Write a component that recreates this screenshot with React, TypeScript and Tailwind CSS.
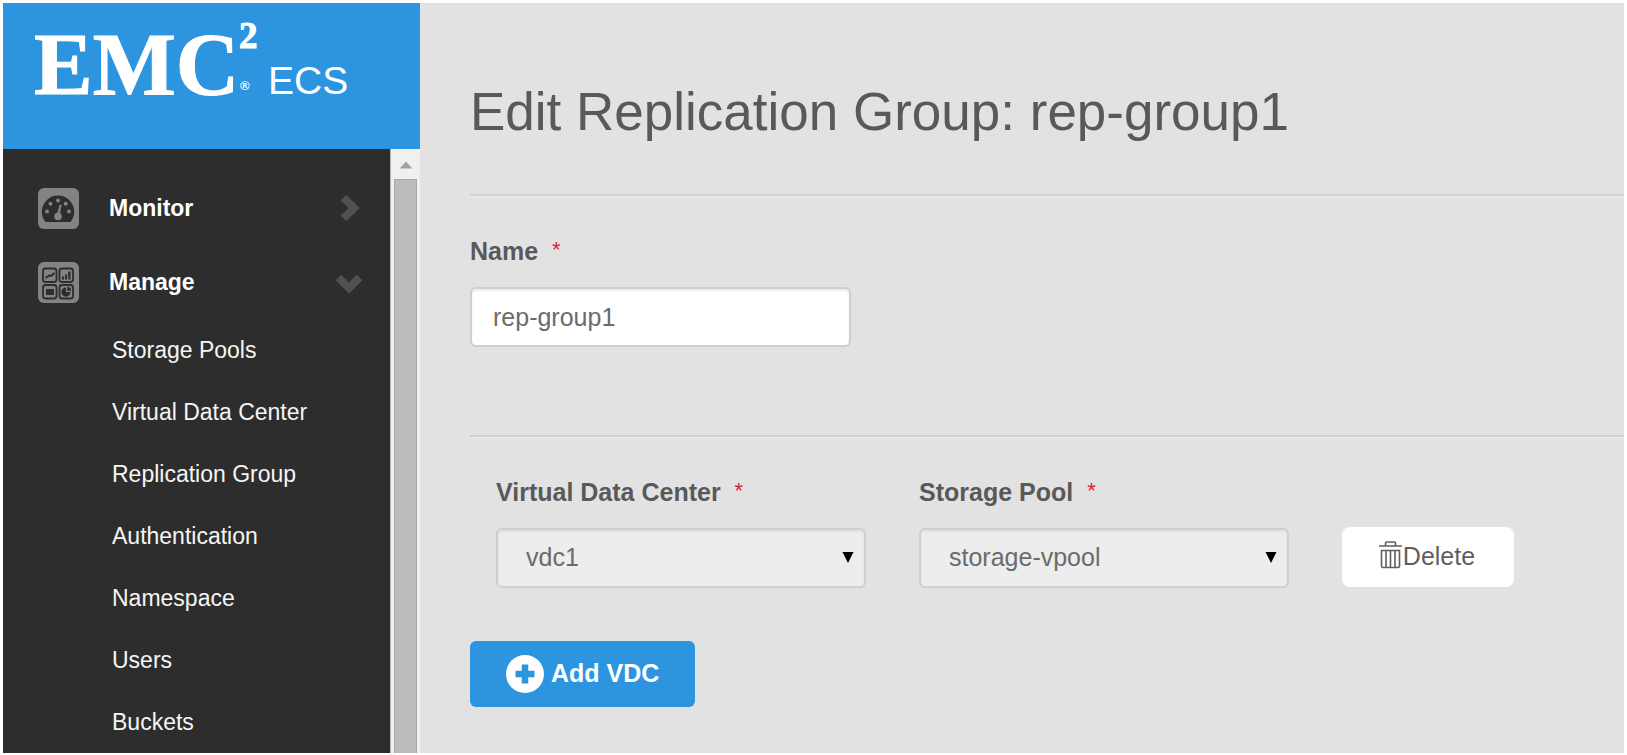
import { useId, useState } from "react";
import type { ReactNode } from "react";

const manageLinks = [
  "Storage Pools",
  "Virtual Data Center",
  "Replication Group",
  "Authentication",
  "Namespace",
  "Users",
  "Buckets",
];

function EmcLogo() {
  return (
    <svg width="234" height="108" viewBox="0 0 234 108" fill="#fff" role="img" aria-label="EMC²" className="font-['Liberation_Serif',serif] font-bold">
      <text x="0" y="87" fontSize="88" stroke="#fff" strokeWidth="1">EMC</text>
      <text x="205" y="41" fontSize="37" stroke="#fff" strokeWidth="1">2</text>
      <text x="206" y="83" fontSize="13" fontFamily="Liberation Sans, sans-serif">®</text>
    </svg>
  );
}

function GaugeIcon() {
  return (
    <svg width="41" height="41" viewBox="0 0 41 41" aria-hidden="true">
      <rect width="41" height="41" rx="6" fill="#838383" />
      <path d="M7.5 34A16.2 16.2 0 1 1 32.500 34Z" fill="#2d2d2d" />
      <g fill="#838383">
        <circle cx="9" cy="23.500" r="2" />
        <circle cx="12.500" cy="15.800" r="2" />
        <circle cx="20" cy="12.500" r="2" />
        <circle cx="27.700" cy="15.800" r="2" />
        <circle cx="31" cy="23.500" r="2" />
        <circle cx="20" cy="28.500" r="3.800" />
        <path d="M21.800 16.500L23.600 17L21.800 27L18.800 26Z" />
      </g>
    </svg>
  );
}

function DashboardIcon() {
  return (
    <svg width="41" height="41" viewBox="0 0 41 41" aria-hidden="true">
      <rect width="41" height="41" rx="6" fill="#838383" />
      <g fill="none" stroke="#2d2d2d" strokeWidth="1.800">
        <rect x="5" y="6.500" width="13.500" height="13.500" rx="2.500" />
        <rect x="21.500" y="6.500" width="13.500" height="13.500" rx="2.500" />
        <rect x="5" y="23" width="13.500" height="13.500" rx="2.500" />
        <rect x="21.500" y="23" width="13.500" height="13.500" rx="2.500" />
        <path d="M7.500 16L11 13.500L13 14L16.500 11" strokeWidth="2" />
      </g>
      <g fill="#2d2d2d">
        <path d="M24 14.500h2V17.500h-2zM27 12.500h2V17.500h-2zM30.200 9.500h2.300V17.500h-2.300z" />
        <rect x="8" y="27" width="8" height="6" />
        <path d="M28 25.500V30H32.500A4.600 4.600 0 1 1 28 25.500Z" />
        <path d="M29.300 24.800A4 4 0 0 1 33.200 28.700H29.300Z" />
      </g>
    </svg>
  );
}

function Chevron({ down = false }: { down?: boolean }) {
  return (
    <svg width="28" height="28" viewBox="0 0 28 28" fill="none" stroke="#515151" strokeWidth="8" aria-hidden="true">
      {down ? <path d="M3.500 9.500L14 20L24.500 9.500" /> : <path d="M8.500 3.500L19 14L8.500 24.500" />}
    </svg>
  );
}

function TrashIcon() {
  return (
    <svg width="24" height="32" viewBox="0 0 24 32" fill="none" stroke="#5f5f5f" strokeWidth="1.600" aria-hidden="true">
      <path d="M0 5H23M6.500 5V2.200Q6.500 1 7.700 1H15.300Q16.500 1 16.500 2.200V5" />
      <path d="M2.500 9.500H20.500V25Q20.500 26.500 19 26.500H4Q2.500 26.500 2.500 25Z" />
      <path d="M7 9.500V26.500M11.500 9.500V26.500M16 9.500V26.500" />
    </svg>
  );
}

function PlusCircleIcon() {
  return (
    <svg width="38" height="38" viewBox="0 0 38 38" aria-hidden="true">
      <circle cx="19" cy="19" r="19" fill="#fff" />
      <path d="M19 9.500V28.500M9.500 19H28.500" stroke="#2d95df" strokeWidth="6.500" />
    </svg>
  );
}

function MenuHeading({ icon, label, open }: { icon: ReactNode; label: string; open: boolean }) {
  return (
    <button type="button" aria-expanded={open} className="flex h-[74px] w-full items-center pr-[27px] pl-[35px] text-left font-bold text-white">
      {icon}
      <span className="ml-[30px] flex-1">{label}</span>
      <Chevron down={open} />
    </button>
  );
}

function FieldLabel({ htmlFor, children }: { htmlFor: string; children: ReactNode }) {
  return (
    <label htmlFor={htmlFor} className="flex gap-3.5 leading-[30px] font-bold">
      {children}
      <span className="text-[22px] leading-[28px] font-normal text-[#e5173f]">*</span>
    </label>
  );
}

function SelectField({ label, value }: { label: string; value: string }) {
  const id = useId();
  return (
    <div className="flex w-[370px] flex-col gap-[21px]">
      <FieldLabel htmlFor={id}>{label}</FieldLabel>
      <div className="relative">
        <select
          id={id}
          defaultValue={value}
          className="h-[60px] w-full appearance-none rounded-md border-2 border-[#cfcfcf] bg-[#ededed] px-7 text-[#6b6b6b] shadow-[inset_0_2px_2px_#e0e0e0]"
        >
          <option>{value}</option>
        </select>
        <svg width="12" height="11" viewBox="0 0 12 11" className="pointer-events-none absolute top-6 right-3" aria-hidden="true">
          <path d="M0.500 0H11.500L6 11Z" fill="#000" />
        </svg>
      </div>
    </div>
  );
}

function Divider() {
  return <hr className="h-[3px] border-t-2 border-b border-t-[#d0d0d0] border-b-[#ebebeb]" />;
}

export default function App() {
  const [name, setName] = useState("rep-group1");

  return (
    <div className="flex min-h-screen bg-white p-[3px] font-['Liberation_Sans',Arial,sans-serif]">
      <aside className="flex w-[417px] shrink-0 flex-col">
        <header className="flex h-[146px] items-start bg-[#2d95df] pt-1 pl-[31px] text-white">
          <EmcLogo />
          <span className="pt-[52px] text-[39px] leading-[44px]">ECS</span>
        </header>
        <div className="flex flex-1">
          <nav className="flex-1 bg-[#2d2d2d] pt-[22px] text-[23px]">
            <MenuHeading icon={<GaugeIcon />} label="Monitor" open={false} />
            <MenuHeading icon={<DashboardIcon />} label="Manage" open />
            <ul>
              {manageLinks.map((link) => (
                <li key={link}>
                  <a href="#" className="flex h-[62px] items-center pl-[109px] text-[#f5f5f5]">
                    {link}
                  </a>
                </li>
              ))}
            </ul>
          </nav>
          <div className="flex w-[30px] flex-col items-center border-l border-[#b5b5b5] bg-[#f0f0f0]" aria-hidden="true">
            <svg width="14" height="30" viewBox="0 0 14 30">
              <path d="M0.500 19.500L7 12.500L13.500 19.500Z" fill="#a3a3a3" />
            </svg>
            <div className="w-[23px] flex-1 border border-b-0 border-[#a8a8a8] bg-[#bcbcbc]" />
          </div>
        </div>
      </aside>

      <main className="min-w-0 flex-1 bg-[#e2e2e2] pl-[50px] text-[25px] text-[#595959]">
        <h1 className="pt-[79px] pb-[52px] text-[53px] leading-[60px]">Edit Replication Group: rep-group1</h1>
        <Divider />
        <section className="flex flex-col items-start gap-[21px] pt-[39px] pb-[88px]">
          <FieldLabel htmlFor="group-name">Name</FieldLabel>
          <input
            id="group-name"
            type="text"
            value={name}
            onChange={(event) => setName(event.target.value)}
            className="h-[60px] w-[381px] rounded-md border-2 border-[#cfcfcf] bg-white px-[21px] text-[#6b6b6b] shadow-[inset_0_2px_2px_#ececec]"
          />
        </section>
        <Divider />
        <section className="flex items-end gap-[53px] pt-[39px] pl-[26px]">
          <SelectField label="Virtual Data Center" value="vdc1" />
          <SelectField label="Storage Pool" value="storage-vpool" />
          <button type="button" className="mb-px flex h-[60px] w-[172px] items-center justify-center rounded-lg bg-white pr-0.5 text-[#5f5f5f]">
            <TrashIcon />
            Delete
          </button>
        </section>
        <button type="button" className="mt-[53px] flex h-[66px] items-center gap-[7px] rounded-md bg-[#2d95df] px-9 font-bold text-white">
          <PlusCircleIcon />
          Add VDC
        </button>
      </main>
    </div>
  );
}
